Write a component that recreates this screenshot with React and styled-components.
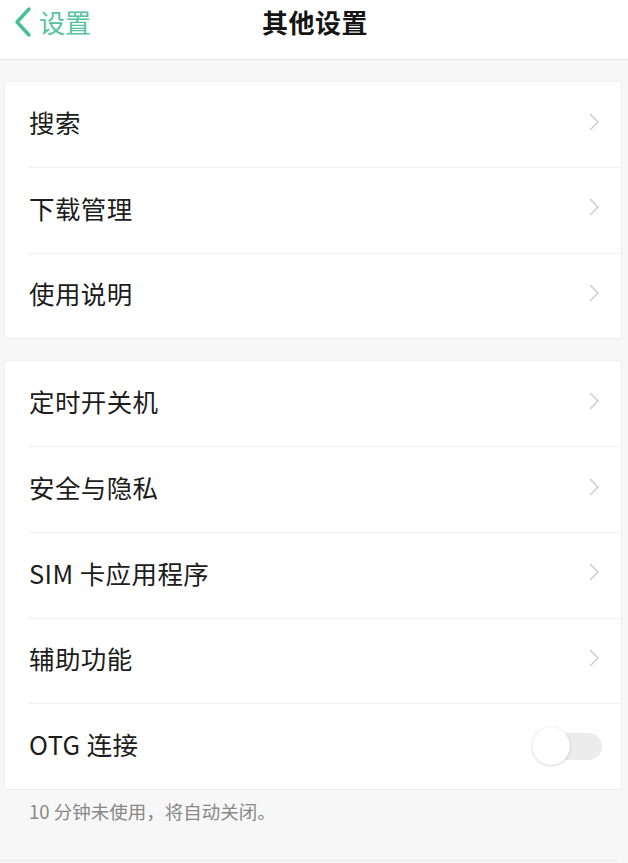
import React from "react";
import styled, { createGlobalStyle } from "styled-components";

const Global = createGlobalStyle`
  html, body { margin: 0; padding: 0; background: #f7f7f7; }
  body { font-family: "Noto Sans CJK SC", "Noto Sans", sans-serif; overflow: hidden; }
`;

const Page = styled.div`
  width: 628px;
  min-height: 863px;
  background: #f7f7f7;
`;

const Header = styled.header`
  height: 60px;
  box-sizing: border-box;
  background: #ffffff;
  border-bottom: 1px solid #e6e6e6;
  display: grid;
  grid-template-columns: 1fr auto 1fr;
  align-items: center;
  padding-bottom: 16px;
`;

const Back = styled.div`
  display: flex;
  align-items: center;
  gap: 6px;
  padding-left: 13px;
  color: #55c39e;
  font-size: 26px;
  line-height: 1;
`;

const Title = styled.h1`
  margin: 0;
  font-size: 26px;
  line-height: 1;
  font-weight: 700;
  color: #151515;
  letter-spacing: 0.5px;
  padding-left: 2px;
`;

const Card = styled.section`
  margin: ${(p) => p.$top}px 6px 0 4px;
  background: #ffffff;
  border: 1px solid #eeeeee;
  border-radius: 2px;
`;

const Row = styled.div`
  height: ${(p) => p.$h}px;
  box-sizing: border-box;
  margin-left: 24px;
  padding-right: 20px;
  padding-bottom: 6px;
  display: flex;
  align-items: center;
  justify-content: space-between;
  border-top: ${(p) => (p.$first ? "none" : "1px solid #f0f0f0")};
`;

const Label = styled.span`
  font-size: 25.5px;
  color: #1c1c1c;
  letter-spacing: 0.4px;
`;

const Switch = styled.div`
  position: relative;
  width: 70px;
  height: 40px;
  margin-right: -1px;
  margin-top: 6px;
`;

const Track = styled.div`
  position: absolute;
  left: 10px;
  right: 0;
  top: 6px;
  height: 27px;
  border-radius: 14px;
  background: #ececec;
`;

const Knob = styled.div`
  position: absolute;
  left: 0;
  top: 0;
  width: 38px;
  height: 38px;
  border-radius: 50%;
  background: #ffffff;
  box-shadow: 0 1px 3px rgba(0, 0, 0, 0.14), 0 0 1px rgba(0, 0, 0, 0.12);
`;

const Footer = styled.p`
  margin: 0 10px 0 0;
  padding: 8px 0 0 29px;
  height: 71px;
  box-sizing: border-box;
  font-size: 18.5px;
  color: #888888;
  border-bottom: 1px solid #ececec;
`;

const Chevron = () => (
  <svg width="14" height="22" viewBox="0 0 14 22">
    <path d="M3 3 L11 11 L3 19" fill="none" stroke="#cfcfcf" strokeWidth="1.6" />
  </svg>
);

const BackArrow = () => (
  <svg width="20" height="32" viewBox="0 0 20 32">
    <path d="M16 3 L4 16 L16 29" fill="none" stroke="#45c096" strokeWidth="3.4" strokeLinecap="round" strokeLinejoin="round" />
  </svg>
);

const group1 = ["搜索", "下载管理", "使用说明"];
const group2 = ["定时开关机", "安全与隐私", "SIM 卡应用程序", "辅助功能"];

export default function App() {
  return (
    <Page>
      <Global />
      <Header>
        <Back>
          <BackArrow />
          <span>设置</span>
        </Back>
        <Title>其他设置</Title>
        <div />
      </Header>
      <Card $top={21}>
        {group1.map((t, i) => (
          <Row key={t} $first={i === 0} $h={85.3}>
            <Label>{t}</Label>
            <Chevron />
          </Row>
        ))}
      </Card>
      <Card $top={21}>
        {group2.map((t, i) => (
          <Row key={t} $first={i === 0} $h={85.6}>
            <Label>{t}</Label>
            <Chevron />
          </Row>
        ))}
        <Row $h={85.6}>
          <Label>OTG 连接</Label>
          <Switch>
            <Track />
            <Knob />
          </Switch>
        </Row>
      </Card>
      <Footer>10 分钟未使用，将自动关闭。</Footer>
    </Page>
  );
}
